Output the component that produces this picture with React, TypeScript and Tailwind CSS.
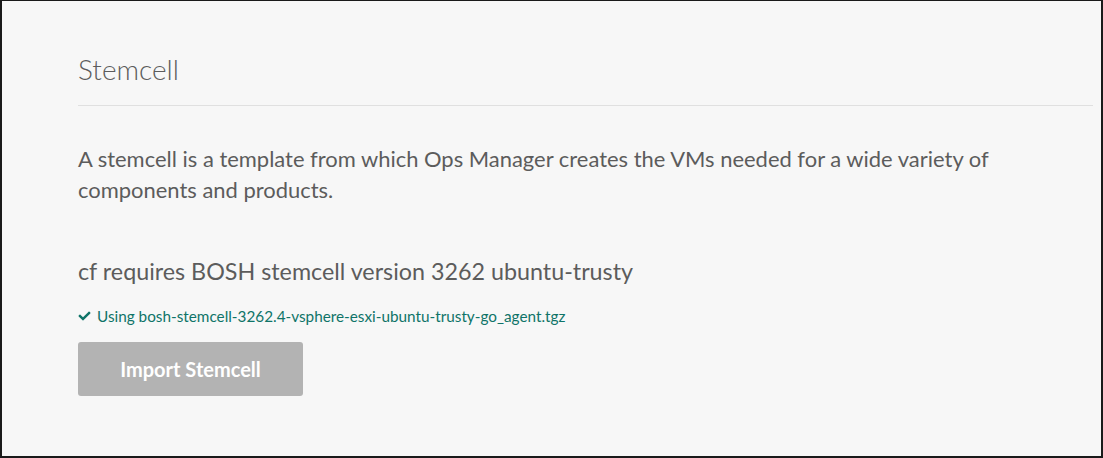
import { FaCheck } from "react-icons/fa";

const App = () => {
  return (
    <div
      className="h-[458px] w-[1103px] overflow-hidden border-t border-r-2 border-b-2 border-l-2 border-[#1a1a1a] bg-[#f7f7f7] pt-[50px] pr-[8px] pl-[76px] text-[#5c5c5c]"
      style={{ fontFamily: "Lato, 'Noto Sans', sans-serif" }}
    >
      <h2 className="text-[28px] leading-[36px] font-light">Stemcell</h2>
      <div className="mt-[18px] h-px bg-[#e0e0e0]" />

      <p className="mt-[37px] text-[21.95px] leading-[31px] font-normal">
        A stemcell is a template from which Ops Manager creates the VMs needed
        for a wide variety of components and products.
      </p>

      <h3 className="mt-[50px] text-[23.3px] leading-[32px] font-normal">
        cf requires BOSH stemcell version 3262 ubuntu-trusty
      </h3>

      <div className="mt-[19px] flex items-center gap-[6px] text-[15.3px] leading-[20px] text-[#0f7468]">
        <FaCheck className="h-[12px] w-[13px]" />
        <span>Using bosh-stemcell-3262.4-vsphere-esxi-ubuntu-trusty-go_agent.tgz</span>
      </div>

      <button className="mt-[16px] flex h-[54px] w-[225px] items-center justify-center rounded-[3px] bg-[#b3b3b3] text-[20px] font-bold text-white">
        Import Stemcell
      </button>
    </div>
  );
};

export default App;
